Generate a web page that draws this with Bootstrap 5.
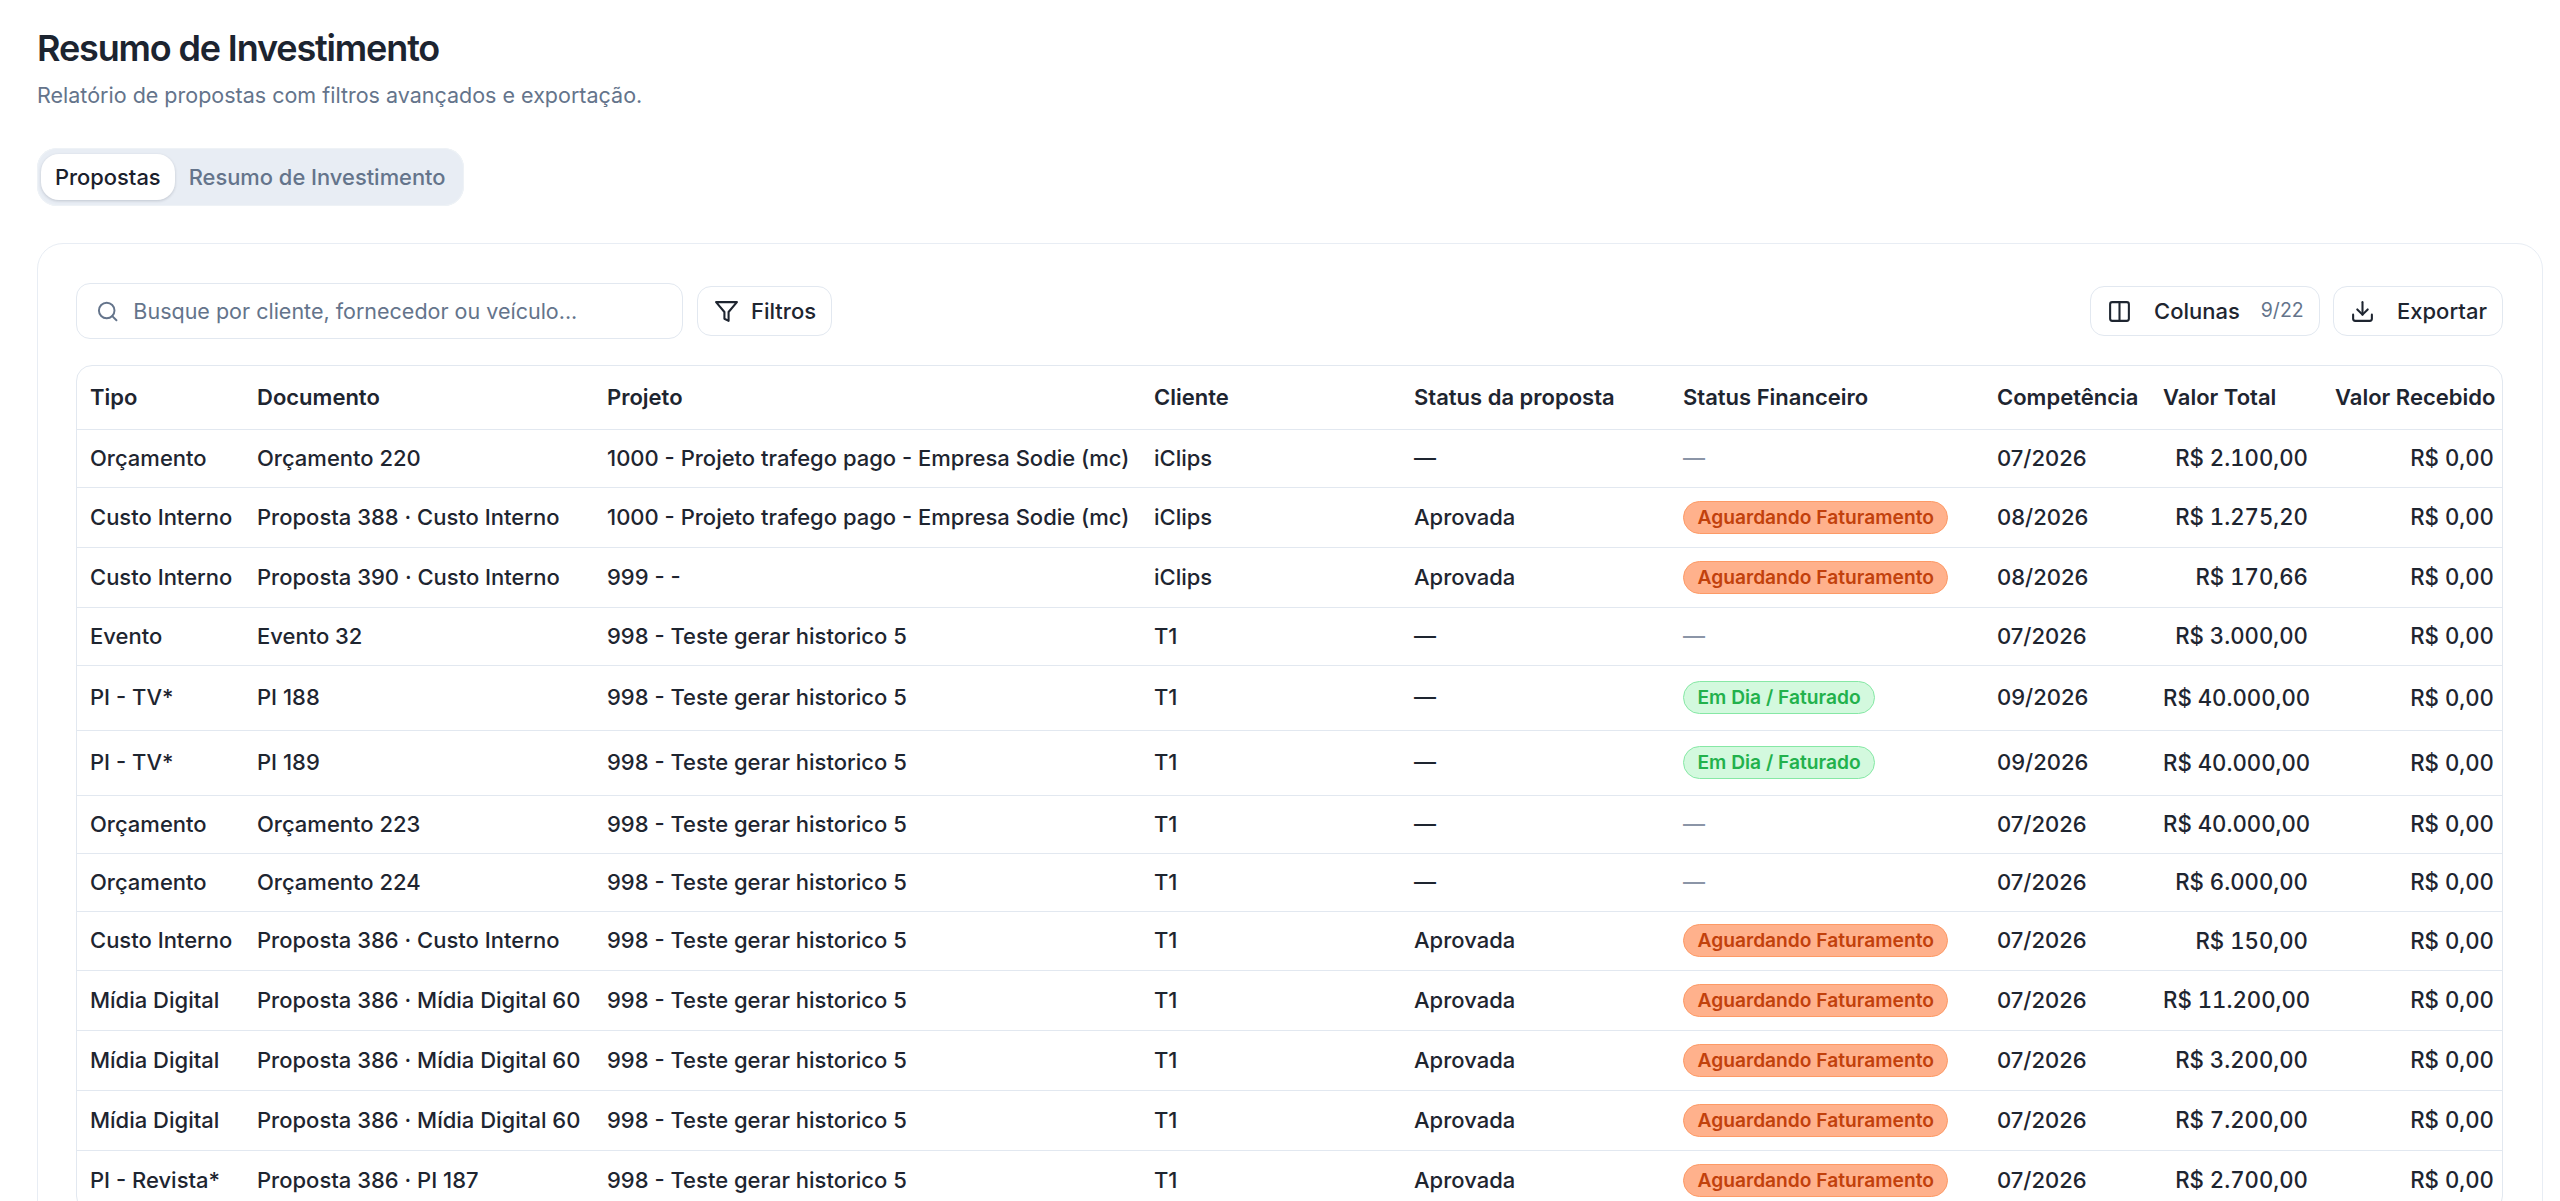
<!DOCTYPE html>
<html lang="pt-BR">
<head>
<meta charset="utf-8">
<title>Resumo de Investimento</title>
<link href="https://cdn.jsdelivr.net/npm/bootstrap@5.3.0/dist/css/bootstrap.min.css" rel="stylesheet">
<style>
html,body{height:100%;overflow:hidden;background:#fff}
body{font-family:Inter,"Liberation Sans",sans-serif;color:#1e2530}
.page-wrap{padding:25px 17px 0 37px}
.page-title{font-size:36px;font-weight:600;letter-spacing:-1.15px;line-height:46px;margin:0;color:#1c2430}
.page-sub{font-size:21.5px;line-height:32px;color:#64748b;margin:8px 0 0;padding-bottom:1px}
.tab-track{display:inline-flex;background:#e8edf4;border-radius:20px;padding:6px 4px;margin-top:36px;height:58px;box-shadow:0 0 0 1px #eef2f6 inset}
.tab-track .nav-link{font-size:21.9px;font-weight:500;line-height:46px;padding:0 14px;border-radius:18px;color:#64748b;margin-left:0;height:46px}
.tab-track .nav-link.active{background:#fff;color:#1a202c;box-shadow:0 1px 3px rgba(15,23,42,.18)}
.tab-track .nav-link.next{padding-left:14px;padding-right:14px}
.report-card{margin-top:37px;border:1px solid #e8edf4;border-radius:26px;padding:39px 39px 0 38px;height:1200px}
.tool-row{height:56px;margin-bottom:26px}
.tool-left{gap:14px}
.tool-right{gap:13px}
.search-box{width:607px;height:56px;border:1px solid #e2e8f0;border-radius:14px;padding:0 19px;gap:14px;color:#64748b}
.search-box input{border:0;outline:0;padding:0;font-size:21.5px;box-shadow:none;color:#1e2530;background:transparent}
.search-box input::placeholder{color:#64748b;opacity:1}
.tool-btn{height:50px;border:1px solid #e2e8f0;border-radius:14px;background:#fff;font-size:22px;font-weight:500;color:#1e2530;padding:0 16px;line-height:1}
.tool-btn svg{flex:none}
.btn-filter{width:135px;gap:12px}
.btn-cols{width:230px}
.btn-export{width:170px}
.btn-cols svg,.btn-export svg{margin-right:22px}
.tool-count{font-size:19.5px;font-weight:400;color:#64748b;margin-left:21px}
.table-shell{border:1px solid #e2e8f0;border-radius:16px;overflow:hidden;width:2427px}
.data-grid{table-layout:fixed;width:2425px;margin:0;font-size:22px;color:#1e2530}
.data-grid th,.data-grid td{padding:0 0 0 13px;vertical-align:middle;white-space:nowrap;border-bottom:1px solid #e2e8f0;border-top:0;color:#1e2530;box-shadow:none;font-weight:450}
.data-grid th{font-weight:600;height:63px}
.data-grid td.num{text-align:right;padding-right:14px;font-size:22.2px;font-variant-numeric:tabular-nums}
.data-grid td.num.last{padding-right:8px}
.r-plain td{height:58px}
.r-orange td{height:60px}
.r-green td{height:65px}
.data-grid .r-tight td{height:59px}
.pill-status{display:block;width:fit-content;height:33px;line-height:31px;border-radius:17px;padding:0 13.5px;font-size:19.2px;font-weight:600;border:1px solid}
.pill-wait{background:#ffb18c;color:#c2410c;border-color:#fd9a66}
.pill-ok{background:#d3f9de;color:#22b14c;border-color:#86e8a5}
.data-grid td.dash-muted{color:#8b95a7}
</style>
</head>
<body>
<div class="page-wrap">
  <h1 class="page-title">Resumo de Investimento</h1>
  <p class="page-sub">Relatório de propostas com filtros avançados e exportação.</p>
  <ul class="nav tab-track">
    <li class="nav-item"><a class="nav-link active" href="#">Propostas</a></li>
    <li class="nav-item"><a class="nav-link next" href="#">Resumo de Investimento</a></li>
  </ul>
  <div class="card report-card">
    <div class="d-flex align-items-center justify-content-between tool-row">
      <div class="d-flex align-items-center tool-left">
        <div class="search-box d-flex align-items-center">
          <svg width="25" height="25" viewBox="0 0 24 24" fill="none" stroke="#64748b" stroke-width="2" stroke-linecap="round" stroke-linejoin="round"><circle cx="11" cy="11" r="8"/><path d="m21 21-4.3-4.3"/></svg>
          <input class="form-control" placeholder="Busque por cliente, fornecedor ou veículo...">
        </div>
        <button class="btn tool-btn btn-filter d-flex align-items-center">
          <svg width="25" height="25" viewBox="0 0 24 24" fill="none" stroke="#1e2530" stroke-width="2" stroke-linecap="round" stroke-linejoin="round"><path d="M22 3H2l8 9.46V19l4 2v-8.54L22 3z"/></svg>
          Filtros
        </button>
      </div>
      <div class="d-flex align-items-center tool-right">
        <button class="btn tool-btn btn-cols d-flex align-items-center">
          <svg width="25" height="25" viewBox="0 0 24 24" fill="none" stroke="#1e2530" stroke-width="2" stroke-linecap="round" stroke-linejoin="round"><rect x="3" y="3" width="18" height="18" rx="2"/><path d="M12 3v18"/></svg>
          <span>Colunas</span><span class="tool-count">9/22</span>
        </button>
        <button class="btn tool-btn btn-export d-flex align-items-center">
          <svg width="25" height="25" viewBox="0 0 24 24" fill="none" stroke="#1e2530" stroke-width="2" stroke-linecap="round" stroke-linejoin="round"><path d="M21 15v4a2 2 0 0 1-2 2H5a2 2 0 0 1-2-2v-4"/><polyline points="7 10 12 15 17 10"/><path d="M12 15V3"/></svg>
          <span>Exportar</span>
        </button>
      </div>
    </div>
    <div class="table-shell">
      <table class="table data-grid">
        <colgroup>
          <col style="width:167px"><col style="width:350px"><col style="width:547px"><col style="width:260px"><col style="width:269px"><col style="width:314px"><col style="width:166px"><col style="width:172px"><col style="width:180px">
        </colgroup>
        <thead><tr><th>Tipo</th><th>Documento</th><th>Projeto</th><th>Cliente</th><th>Status da proposta</th><th>Status Financeiro</th><th>Competência</th><th>Valor Total</th><th>Valor Recebido</th></tr></thead>
        <tbody>
          <tr class="r-plain"><td>Orçamento</td><td>Orçamento 220</td><td>1000 - Projeto trafego pago - Empresa Sodie (mc)</td><td>iClips</td><td>—</td><td class="dash-muted">—</td><td>07/2026</td><td class="num">R$ 2.100,00</td><td class="num last">R$ 0,00</td></tr>
          <tr class="r-orange"><td>Custo Interno</td><td>Proposta 388 · Custo Interno</td><td>1000 - Projeto trafego pago - Empresa Sodie (mc)</td><td>iClips</td><td>Aprovada</td><td><span class="pill-status pill-wait">Aguardando Faturamento</span></td><td>08/2026</td><td class="num">R$ 1.275,20</td><td class="num last">R$ 0,00</td></tr>
          <tr class="r-orange"><td>Custo Interno</td><td>Proposta 390 · Custo Interno</td><td>999 - -</td><td>iClips</td><td>Aprovada</td><td><span class="pill-status pill-wait">Aguardando Faturamento</span></td><td>08/2026</td><td class="num">R$ 170,66</td><td class="num last">R$ 0,00</td></tr>
          <tr class="r-plain"><td>Evento</td><td>Evento 32</td><td>998 - Teste gerar historico 5</td><td>T1</td><td>—</td><td class="dash-muted">—</td><td>07/2026</td><td class="num">R$ 3.000,00</td><td class="num last">R$ 0,00</td></tr>
          <tr class="r-green"><td>PI - TV*</td><td>PI 188</td><td>998 - Teste gerar historico 5</td><td>T1</td><td>—</td><td><span class="pill-status pill-ok">Em Dia / Faturado</span></td><td>09/2026</td><td class="num">R$ 40.000,00</td><td class="num last">R$ 0,00</td></tr>
          <tr class="r-green"><td>PI - TV*</td><td>PI 189</td><td>998 - Teste gerar historico 5</td><td>T1</td><td>—</td><td><span class="pill-status pill-ok">Em Dia / Faturado</span></td><td>09/2026</td><td class="num">R$ 40.000,00</td><td class="num last">R$ 0,00</td></tr>
          <tr class="r-plain"><td>Orçamento</td><td>Orçamento 223</td><td>998 - Teste gerar historico 5</td><td>T1</td><td>—</td><td class="dash-muted">—</td><td>07/2026</td><td class="num">R$ 40.000,00</td><td class="num last">R$ 0,00</td></tr>
          <tr class="r-plain"><td>Orçamento</td><td>Orçamento 224</td><td>998 - Teste gerar historico 5</td><td>T1</td><td>—</td><td class="dash-muted">—</td><td>07/2026</td><td class="num">R$ 6.000,00</td><td class="num last">R$ 0,00</td></tr>
          <tr class="r-orange r-tight"><td>Custo Interno</td><td>Proposta 386 · Custo Interno</td><td>998 - Teste gerar historico 5</td><td>T1</td><td>Aprovada</td><td><span class="pill-status pill-wait">Aguardando Faturamento</span></td><td>07/2026</td><td class="num">R$ 150,00</td><td class="num last">R$ 0,00</td></tr>
          <tr class="r-orange"><td>Mídia Digital</td><td>Proposta 386 · Mídia Digital 60</td><td>998 - Teste gerar historico 5</td><td>T1</td><td>Aprovada</td><td><span class="pill-status pill-wait">Aguardando Faturamento</span></td><td>07/2026</td><td class="num">R$ 11.200,00</td><td class="num last">R$ 0,00</td></tr>
          <tr class="r-orange"><td>Mídia Digital</td><td>Proposta 386 · Mídia Digital 60</td><td>998 - Teste gerar historico 5</td><td>T1</td><td>Aprovada</td><td><span class="pill-status pill-wait">Aguardando Faturamento</span></td><td>07/2026</td><td class="num">R$ 3.200,00</td><td class="num last">R$ 0,00</td></tr>
          <tr class="r-orange"><td>Mídia Digital</td><td>Proposta 386 · Mídia Digital 60</td><td>998 - Teste gerar historico 5</td><td>T1</td><td>Aprovada</td><td><span class="pill-status pill-wait">Aguardando Faturamento</span></td><td>07/2026</td><td class="num">R$ 7.200,00</td><td class="num last">R$ 0,00</td></tr>
          <tr class="r-orange"><td>PI - Revista*</td><td>Proposta 386 · PI 187</td><td>998 - Teste gerar historico 5</td><td>T1</td><td>Aprovada</td><td><span class="pill-status pill-wait">Aguardando Faturamento</span></td><td>07/2026</td><td class="num">R$ 2.700,00</td><td class="num last">R$ 0,00</td></tr>
        </tbody>
      </table>
    </div>
  </div>
</div>
<script src="https://cdn.jsdelivr.net/npm/bootstrap@5.3.0/dist/js/bootstrap.bundle.min.js"></script>
</body>
</html>
